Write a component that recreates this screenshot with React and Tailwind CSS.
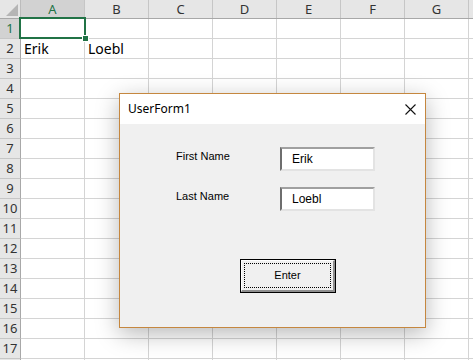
import React from 'react';

const COLS = ['A', 'B', 'C', 'D', 'E', 'F', 'G', 'H'];
const ROWS = Array.from({ length: 18 }, (_, i) => i + 1);

const cellData = {
  '2A': 'Erik',
  '2B': 'Loebl',
};

function Sheet() {
  return (
    <div className="font-['Noto_Sans','Liberation_Sans',sans-serif] text-[13px] text-[#222]">
      {/* Column headers */}
      <div className="flex h-[19px] bg-[#e6e6e6] border-b border-[#a8a8a8]">
        <div className="w-[21px] shrink-0 border-r border-[#bcbcbc] relative">
          <svg className="absolute right-[2px] bottom-[2px]" width="12" height="12" viewBox="0 0 12 12">
            <polygon points="12,0 12,12 0,12" fill="#b5b5b5" />
          </svg>
        </div>
        {COLS.map((c) => (
          <div
            key={c}
            className={`w-[64px] shrink-0 border-r border-[#c6c6c6] flex items-center justify-center leading-none ${
              c === 'A' ? 'bg-[#d2d2d2] text-[#217346]' : 'text-[#333]'
            }`}
          >
            {c === 'H' ? '' : c}
          </div>
        ))}
      </div>

      {/* Rows */}
      {ROWS.map((r) => (
        <div key={r} className="flex h-[20px]">
          <div
            className={`w-[21px] shrink-0 border-r border-b border-[#a8a8a8] border-b-[#c6c6c6] flex items-center justify-center leading-none text-[13px] ${
              r === 1 ? 'bg-[#d2d2d2] text-[#217346]' : 'bg-[#e6e6e6] text-[#333]'
            }`}
          >
            {r < 18 ? r : ''}
          </div>
          {COLS.map((c) => (
            <div
              key={c}
              className="w-[64px] shrink-0 border-r border-b border-[#d4d4d4] bg-white flex items-end pl-[3px] text-[14px] leading-[18px] text-black"
            >
              {cellData[`${r}${c}`] || ''}
            </div>
          ))}
        </div>
      ))}
    </div>
  );
}

function TextBox({ value }) {
  return (
    <div className="w-[95px] h-[24px] bg-white border-2 border-t-[#a0a0a0] border-l-[#6e6e6e] border-r-[#e3e3e3] border-b-[#e3e3e3] flex items-center pl-[10px] text-[12px] text-black">
      {value}
    </div>
  );
}

function UserForm() {
  return (
    <div className="absolute left-[119px] top-[93px] w-[307px] h-[235px] border border-[#c5873f] bg-[#f0f0f0] shadow-[0_6px_22px_rgba(0,0,0,0.28)] flex flex-col font-['Noto_Sans','Liberation_Sans',sans-serif]">
      {/* Title bar */}
      <div className="h-[30px] bg-white flex items-center justify-between pl-[8px] pr-[9px]">
        <span className="text-[12px] text-black">UserForm1</span>
        <svg width="11" height="11" viewBox="0 0 11 11">
          <path d="M0.5 0.5 L10.5 10.5 M10.5 0.5 L0.5 10.5" stroke="#111" strokeWidth="1.1" />
        </svg>
      </div>

      {/* Body */}
      <div className="flex-1 flex flex-col pt-[23px] pl-[56px] font-['Liberation_Sans',sans-serif] text-[11px] text-black">
        <div className="flex items-start">
          <div className="w-[104px] pt-[2px] leading-[14px]">First Name</div>
          <TextBox value="Erik" />
        </div>
        <div className="flex items-start mt-[16px]">
          <div className="w-[104px] pt-[2px] leading-[14px]">Last Name</div>
          <TextBox value="Loebl" />
        </div>

        <div className="mt-[48px] ml-[64px] w-[96px] h-[34px] border border-black bg-[#f0f0f0]">
          <div className="w-full h-full border-t border-l border-white border-r-2 border-b-2 border-r-[#8f8f8f] border-b-[#8f8f8f] p-[2px]">
            <div className="w-full h-full border border-dotted border-black flex items-center justify-center text-[11px]">
              Enter
            </div>
          </div>
        </div>
      </div>
    </div>
  );
}

export default function App() {
  return (
    <div className="relative w-[473px] h-[360px] overflow-hidden bg-white">
      <Sheet />
      {/* Active cell selection */}
      <div className="absolute left-[19px] top-[17px] w-[67px] h-[22px] border-2 border-[#217346] pointer-events-none" />
      <div className="absolute left-[82px] top-[35px] w-[5px] h-[5px] bg-[#217346] border border-white box-content" />
      <UserForm />
    </div>
  );
}
